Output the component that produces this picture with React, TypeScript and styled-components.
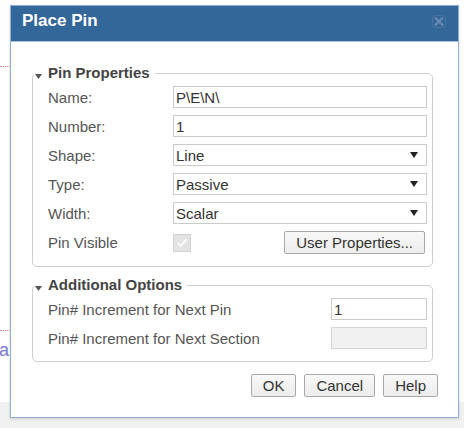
import React from 'react'
import styled, { createGlobalStyle } from 'styled-components'

const GlobalStyle = createGlobalStyle`
	body {
		margin: 0;
		font-family: "Liberation Sans", Arial, sans-serif;
	}
`

const Canvas = styled.div`
	position: relative;
	width: 464px;
	height: 428px;
	overflow: hidden;
	background-color: #fff;
	background-image: radial-gradient(circle, #c4c4c4 0.6px, transparent 1px);
	background-size: 22px 22px;
	background-position: 4px 2px;
`

const GridLine = styled.div<{ top: number }>`
	position: absolute;
	left: 0;
	top: ${(p) => p.top}px;
	width: 12px;
	border-top: 1px dotted #ec8a8a;
`

const CanvasText = styled.span`
	position: absolute;
	left: -1px;
	top: 340px;
	font-size: 18px;
	color: #7b7bcc;
`

const BottomStrip = styled.div`
	position: absolute;
	left: 0;
	right: 0;
	bottom: 0;
	height: 26px;
	background: #f1f1f1;
`

const Dialog = styled.div`
	position: absolute;
	left: 10px;
	top: 5px;
	width: 449px;
	height: 413px;
	box-sizing: border-box;
	border: 1px solid #90b1d5;
	background: #fff;
	display: flex;
	flex-direction: column;
	box-shadow: 0 1px 3px rgba(0, 0, 0, 0.15);
`

const TitleBar = styled.div`
	height: 36px;
	box-sizing: border-box;
	background: #346799;
	border-bottom: 1px solid #a9c2dc;
	display: flex;
	align-items: center;
	justify-content: space-between;
	padding: 0 12px 5px 11px;
`

const Title = styled.span`
	color: #fff;
	font-size: 17px;
	font-weight: 700;
`

const CloseIcon = styled.svg`
	display: block;
`

const Body = styled.div`
	padding: 22px 20px 0 21px;
	display: flex;
	flex-direction: column;
`

const Group = styled.fieldset`
	margin: 0;
	padding: 0;
	width: 401px;
	box-sizing: border-box;
	border: 1px solid #cdcdcd;
	border-radius: 5px;
	& + & {
		margin-top: 9px;
	}
`

const Legend = styled.legend`
	margin-left: 1px;
	padding: 0 5px 0 0;
	font-size: 15px;
	font-weight: 700;
	line-height: 18px;
	color: #444;
`

const Caret = styled.svg`
	display: inline-block;
	margin: 0 6px 0 1px;
	vertical-align: -1px;
`

const GroupContent = styled.div`
	padding: 4px 5px 12px 15px;
	display: flex;
	flex-direction: column;
	gap: 7px;
`

const Row = styled.div`
	display: flex;
	align-items: center;
	min-height: 22px;
`

const Label = styled.span<{ wide?: boolean }>`
	${(p) => (p.wide ? 'flex: 1;' : 'width: 125px;')}
	font-size: 15px;
	color: #555;
`

const Field = styled.div<{ disabled?: boolean; narrow?: boolean }>`
	${(p) => (p.narrow ? 'width: 96px;' : 'flex: 1;')}
	height: 22px;
	box-sizing: border-box;
	display: flex;
	align-items: center;
	justify-content: space-between;
	padding: 0 8px 0 2px;
	border: 1px solid ${(p) => (p.disabled ? '#d6d6d6' : '#cbcbcb')};
	background: ${(p) => (p.disabled ? '#f0f0f0' : '#fff')};
	font-size: 15px;
	color: #333;
`

const CheckBox = styled.div`
	width: 18px;
	height: 18px;
	box-sizing: border-box;
	border: 1px solid #d2d2d2;
	background: #e3e3e3;
	display: flex;
	align-items: center;
	justify-content: center;
`

const Spacer = styled.div`
	flex: 1;
`

const Button = styled.button<{ inset?: number }>`
	height: 23px;
	box-sizing: border-box;
	padding: 0 11px;
	margin-right: ${(p) => p.inset || 0}px;
	border: 1px solid #a9a9a9;
	border-radius: 2px;
	background: linear-gradient(#f8f8f8, #ececec);
	font-family: inherit;
	font-size: 15px;
	color: #333;
	line-height: 21px;
`

const Actions = styled.div`
	margin-top: 12px;
	display: flex;
	justify-content: flex-end;
	gap: 8px;
`

const Arrow = () => (
	<svg width="8" height="6" viewBox="0 0 8 6">
		<polygon points="0,0 8,0 4,6" fill="#222" />
	</svg>
)

const Select: React.FC<{ value: string }> = ({ value }) => (
	<Field>
		<span>{value}</span>
		<Arrow />
	</Field>
)

const props = [
	{ label: 'Name:', value: 'P\\E\\N\\', select: false },
	{ label: 'Number:', value: '1', select: false },
	{ label: 'Shape:', value: 'Line', select: true },
	{ label: 'Type:', value: 'Passive', select: true },
	{ label: 'Width:', value: 'Scalar', select: true },
]

const GroupCaret = () => (
	<Caret width="7" height="5" viewBox="0 0 7 5">
		<polygon points="0,0 7,0 3.5,5" fill="#555" />
	</Caret>
)

export default function App() {
	return (
		<>
			<GlobalStyle />
			<Canvas>
				<GridLine top={66} />
				<GridLine top={330} />
				<CanvasText>a</CanvasText>
				<BottomStrip />
				<Dialog>
					<TitleBar>
						<Title>Place Pin</Title>
						<CloseIcon width="14" height="13" viewBox="0 0 14 13">
							<rect x="0.5" y="0.5" width="13" height="12" rx="3" fill="none" stroke="#4d74a0" />
							<path d="M3 2.5 L11 10.5 M11 2.5 L3 10.5" stroke="#6688b0" strokeWidth="2.4" />
						</CloseIcon>
					</TitleBar>
					<Body>
						<Group>
							<Legend>
								<GroupCaret />
								Pin Properties
							</Legend>
							<GroupContent>
								{props.map((p) => (
									<Row key={p.label}>
										<Label>{p.label}</Label>
										{p.select ? (
											<Select value={p.value} />
										) : (
											<Field>{p.value}</Field>
										)}
									</Row>
								))}
								<Row>
									<Label>Pin Visible</Label>
									<CheckBox>
										<svg width="12" height="10" viewBox="0 0 12 10">
											<path d="M1.5 5 L4.5 8 L10.5 1.5" fill="none" stroke="#fafafa" strokeWidth="2" />
										</svg>
									</CheckBox>
									<Spacer />
									<Button inset={2}>User Properties...</Button>
								</Row>
							</GroupContent>
						</Group>
						<Group>
							<Legend>
								<GroupCaret />
								Additional Options
							</Legend>
							<GroupContent>
								<Row>
									<Label wide>Pin# Increment for Next Pin</Label>
									<Field narrow>1</Field>
								</Row>
								<Row>
									<Label wide>Pin# Increment for Next Section</Label>
									<Field narrow disabled />
								</Row>
							</GroupContent>
						</Group>
						<Actions>
							<Button>OK</Button>
							<Button>Cancel</Button>
							<Button>Help</Button>
						</Actions>
					</Body>
				</Dialog>
			</Canvas>
		</>
	)
}
